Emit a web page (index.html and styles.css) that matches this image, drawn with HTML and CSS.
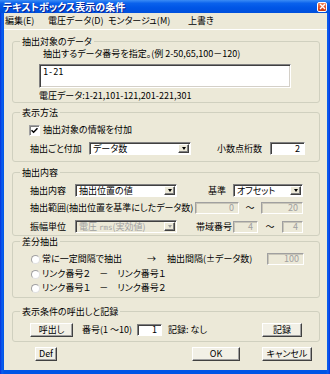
FILE: index.html
```html
<!DOCTYPE html>
<html lang="ja">
<head>
<meta charset="utf-8">
<link rel="stylesheet" href="styles.css">
</head>
<body>
<div class="window">
  <div class="titlebar">
    <span class="title">テキストボックス表示の条件</span>
    <span class="close"><svg width="7" height="7" viewBox="0 0 7 7"><path d="M1 1L6 6M6 1L1 6" stroke="#fff" stroke-width="1.4"/></svg></span>
  </div>
  <div class="frame">
    <div class="menubar">
      <span class="m1">編集(E)</span><span class="m2">電圧データ(D)</span><span class="m3">モンタージュ(M)</span><span>上書き</span>
    </div>
    <div class="client">
      <fieldset class="group g1">
        <legend>抽出対象のデータ</legend>
        <div class="hint">抽出するデータ番号を指定。(例 2-50,65,100－120)</div>
        <div class="textarea">1-21</div>
        <div class="info">電圧データ:1-21,101-121,201-221,301</div>
      </fieldset>

      <fieldset class="group g2">
        <legend>表示方法</legend>
        <div class="row r-check">
          <span class="check"><svg width="7" height="7" viewBox="0 0 7 7"><path d="M0.5 3.2L2.6 5.3L6.5 1.2" fill="none" stroke="#000" stroke-width="1.5"/></svg></span>
          <span>抽出対象の情報を付加</span>
        </div>
        <div class="row r-add">
          <span class="lbl w-add">抽出ごと付加</span>
          <div class="combo c-add"><span class="combo-text">データ数</span><span class="combo-btn"><i class="tri"></i></span></div>
          <span class="lbl w-dec">小数点桁数</span>
          <div class="edit e-dec">2</div>
        </div>
      </fieldset>

      <fieldset class="group g3">
        <legend>抽出内容</legend>
        <div class="row r3a">
          <span class="lbl w-45">抽出内容</span>
          <div class="combo c-102"><span class="combo-text">抽出位置の値</span><span class="combo-btn"><i class="tri"></i></span></div>
          <span class="lbl w-kijun">基準</span>
          <div class="combo c-70"><span class="combo-text">オフセット</span><span class="combo-btn"><i class="tri"></i></span></div>
        </div>
        <div class="row r3b">
          <span class="lbl w-range">抽出範囲(抽出位置を基準にしたデータ数)</span>
          <div class="edit disabled e-44">0</div>
          <span class="tilde t-22">～</span>
          <div class="edit disabled e-42">20</div>
        </div>
        <div class="row r3c">
          <span class="lbl w-45">振幅単位</span>
          <div class="combo disabled c-102"><span class="combo-text">電圧 <span class="mono">rms</span>(実効値)</span><span class="combo-btn"><i class="tri"></i></span></div>
          <span class="lbl w-band">帯域番号</span>
          <div class="edit disabled e-25">4</div>
          <span class="tilde t-24">～</span>
          <div class="edit disabled e-21">4</div>
        </div>
      </fieldset>

      <fieldset class="group g4">
        <legend>差分抽出</legend>
        <div class="row r4a">
          <span class="radio"></span>
          <span class="lbl w-const">常に一定間隔で抽出</span>
          <span class="lbl w-arrow">→</span>
          <span class="lbl w-interval">抽出間隔(±データ数)</span>
          <div class="edit disabled e-37">100</div>
        </div>
        <div class="row r4b">
          <span class="radio"></span>
          <span>リンク番号２　－　リンク番号１</span>
        </div>
        <div class="row r4c">
          <span class="radio"></span>
          <span>リンク番号１　－　リンク番号２</span>
        </div>
      </fieldset>

      <fieldset class="group g5">
        <legend>表示条件の呼出しと記録</legend>
        <div class="row r5">
          <button class="btn b-43">呼出し</button>
          <span class="lbl w-num">番号(1 ～10)</span>
          <div class="edit e-25">1</div>
          <span class="lbl w-rec">記録: なし</span>
          <button class="btn b-40">記録</button>
        </div>
      </fieldset>

      <div class="footer">
        <button class="btn b-def">Def</button>
        <button class="btn b-ok">OK</button>
        <button class="btn b-cancel">キャンセル</button>
      </div>
    </div>
  </div>
</div>
</body>
</html>
```

FILE: styles.css
```css
* { box-sizing: border-box; }
html, body { margin: 0; padding: 0; }
body {
  width: 330px;
  height: 374px;
  overflow: hidden;
  font-family: "Noto Sans CJK JP", "Noto Sans", sans-serif;
  font-size: 9px;
  line-height: 12px;
  font-feature-settings: "palt";
  color: #000;
  background: #fff;
}
.window {
  width: 330px;
  height: 374px;
  display: flex;
  flex-direction: column;
  background: linear-gradient(to right, #0831d9 0, #0a5ff0 2px, #0055e5 4px, #0055e5 326px, #0a5ff0 328px, #0831d9 330px);
}
.titlebar {
  height: 13px;
  flex: none;
  display: flex;
  align-items: center;
  justify-content: space-between;
  padding: 0 3px 0 3px;
  background: linear-gradient(to bottom, #3b8cf5 0%, #0a62ec 25%, #0055e6 60%, #0050dc 100%);
  color: #fff;
  font-weight: bold;
  font-size: 10px;
  line-height: 13px;
  text-shadow: 1px 1px 0 #0a1e8c;
}
.close {
  width: 10px;
  height: 10px;
  border: 1px solid #fff;
  border-radius: 2px;
  background: linear-gradient(to bottom, #f0875f, #e04a1f 60%, #c93c12);
  display: flex;
  align-items: center;
  justify-content: center;
}
.frame {
  flex: 1;
  margin: 0 3px 4px 4px;
  background: #ece9d8;
  display: flex;
  flex-direction: column;
}
.menubar {
  height: 17px;
  flex: none;
  display: flex;
  align-items: center;
  padding-left: 1px;
  border-bottom: 1px solid #fff;
}
.m1 { width: 43px; }
.m2 { width: 60px; }
.m3 { width: 80px; }
.client {
  padding: 6px 7px 0 8px;
}
.group {
  margin: 0;
  padding: 0;
  border: 1px solid #d0d0bf;
  border-radius: 3px;
  min-inline-size: 0;
}
.group legend {
  margin-left: 7px;
  padding: 0 2px;
  height: 11px;
  line-height: 11px;
}
.row {
  display: flex;
  align-items: center;
  white-space: nowrap;
}
.lbl { flex: none; }

/* group 1 */
.hint { padding-left: 30px; height: 12px; margin-top: 1px; line-height: 12px; }
.textarea {
  margin: 4px 0 0 26px;
  width: 252px;
  height: 24px;
  background: #fff;
  border: 1px solid;
  border-color: #808080 #fff #fff #808080;
  box-shadow: inset 1px 1px 0 #404040, inset -1px -1px 0 #d4d0c8;
  padding: 2px 3px;
  font-family: "DejaVu Sans Mono", monospace;
  font-size: 8.5px;
  line-height: 11px;
}
.info { margin: 2px 0 0 26px; height: 12px; }

/* group 2 */
.g2 { margin-top: 4px; padding-bottom: 6px; }
.r-check { margin-top: 6px; height: 12px; padding-left: 16px; }
.check {
  width: 11px;
  height: 11px;
  margin-right: 3px;
  background: #fff;
  border: 1px solid;
  border-color: #a0a0a0 #fff #fff #a0a0a0;
  box-shadow: inset 1px 1px 0 #808080;
  display: flex;
  align-items: center;
  justify-content: center;
}
.r-add { margin-top: 6px; height: 13px; padding-left: 17px; }
.w-add { width: 59px; }
.w-dec { margin-left: 26px; width: 53px; }

/* combos and edits */
.combo {
  flex: none;
  height: 13px;
  display: flex;
  align-items: center;
  background: #fff;
  border: 1px solid;
  border-color: #808080 #fff #fff #808080;
  box-shadow: inset 1px 1px 0 #404040;
}
.combo-text { flex: 1; padding: 0 0 0 3px; line-height: 11px; white-space: nowrap; }
.combo-btn {
  flex: none;
  width: 11px;
  height: 9px;
  margin: 0 1px 0 0;
  background: #ece9d8;
  border: 1px solid;
  border-color: #fff #404040 #404040 #fff;
  box-shadow: inset -1px -1px 0 #808080;
  display: flex;
  align-items: center;
  justify-content: center;
}
.tri {
  width: 0;
  height: 0;
  border-left: 2.5px solid transparent;
  border-right: 2.5px solid transparent;
  border-top: 3px solid #000;
}
.combo.disabled { background: #ece9d8; color: #a0a0a0; }
.combo.disabled .tri { border-top-color: #a0a0a0; }
.mono { font-family: "DejaVu Sans Mono", monospace; font-size: 7.5px; }
.c-add, .c-102 { width: 102px; }
.c-70 { width: 70px; }
.edit {
  flex: none;
  height: 12px;
  background: #fff;
  border: 1px solid;
  border-color: #808080 #fff #fff #808080;
  box-shadow: inset 1px 1px 0 #404040;
  text-align: right;
  padding-right: 4px;
  line-height: 10px;
}
.edit.disabled {
  background: #ece9d8;
  color: #a0a0a0;
  border-color: #a0a0a0 #fff #fff #a0a0a0;
  box-shadow: inset 1px 1px 0 #c8c5b8;
}
.e-dec { width: 35px; height: 13px; line-height: 11px; }
.e-44 { width: 44px; }
.e-42 { width: 42px; }
.e-25 { width: 25px; }
.e-21 { width: 21px; }
.e-37 { width: 37px; }
.tilde { flex: none; text-align: center; }
.t-22 { width: 22px; }
.t-24 { width: 24px; }

/* group 3 */
.g3 { margin-top: 5px; padding-bottom: 2px; }
.r3a { margin-top: 6px; height: 13px; padding-left: 17px; }
.r3b { margin-top: 5px; height: 12px; padding-left: 17px; }
.r3c { margin-top: 6px; height: 13px; padding-left: 17px; }
.w-45 { width: 45px; }
.w-kijun { margin-left: 31px; width: 25px; }
.w-range { width: 165px; }
.w-band { margin-left: 19px; width: 37px; }

/* group 4 */
.g4 { margin-top: 0; padding-bottom: 3px; }
.r4a { margin-top: 6px; height: 12px; padding-left: 18px; }
.r4b { margin-top: 3px; height: 12px; padding-left: 18px; }
.r4c { margin-top: 2px; height: 12px; padding-left: 18px; }
.radio {
  flex: none;
  width: 9px;
  height: 9px;
  margin-right: 2px;
  border-radius: 50%;
  background: #fff;
  border: 1px solid;
  border-color: #a0a0a0 #e0e0e0 #e0e0e0 #a0a0a0;
}
.w-const { width: 105px; }
.w-arrow { width: 20px; }
.w-interval { width: 100px; }

/* group 5 */
.g5 { margin-top: 8px; padding-bottom: 4px; }
.r5 { margin-top: 6px; height: 14px; padding-left: 17px; }
.btn {
  flex: none;
  height: 14px;
  margin: 0;
  padding: 0;
  font: inherit;
  font-feature-settings: "palt";
  line-height: 12px;
  color: #000;
  background: #f2f0e6;
  border: 1px solid;
  border-color: #fff #404040 #404040 #fff;
  box-shadow: inset -1px -1px 0 #a0a0a0;
  text-align: center;
}
.b-43 { width: 43px; }
.b-40 { width: 40px; }
.w-num { margin-left: 9px; width: 55px; }
.w-rec { margin-left: 6px; width: 94px; }

/* footer */
.footer { display: flex; margin-top: 5px; height: 14px; }
.b-def { margin-left: 23px; width: 22px; }
.b-ok { margin-left: 135px; width: 48px; }
.b-cancel { margin-left: 22px; width: 50px; }
```
